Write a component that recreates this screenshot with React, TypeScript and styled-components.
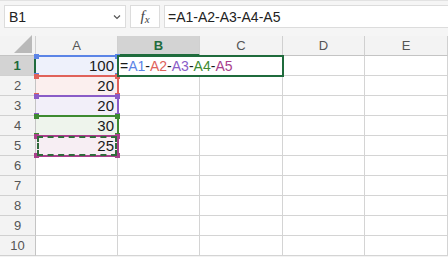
import React from 'react';
import styled, { createGlobalStyle } from 'styled-components';

const GlobalStyle = createGlobalStyle`
  html, body {
    margin: 0;
    padding: 0;
    background: #f3f3f3;
    font-family: 'Liberation Sans', Arial, sans-serif;
  }
`;

const COLS = ['A', 'B', 'C', 'D', 'E'];
const COL_W = [82, 82, 83, 82, 83];
const ROW_H = 20;
const HEAD_W = 36;
const HEAD_H = 20;

const values: Record<number, string> = { 1: '100', 2: '20', 3: '20', 4: '30', 5: '25' };

// formula reference colours
const refs = [
  { row: 1, color: '#5b84e6', fill: '#eef1fb' },
  { row: 2, color: '#e0625a', fill: '#fbefee' },
  { row: 3, color: '#8a5cc7', fill: '#f2eff9' },
  { row: 4, color: '#3e8a31', fill: '#eef4ec' },
  { row: 5, color: '#a9408c', fill: '#f7eef3' }
];

const GREEN = '#1f6b3c';

function App() {
  return (
    <>
      <GlobalStyle />
      <Toolbar>
        <NameBox>
          <span>B1</span>
          <svg width="8" height="6" viewBox="0 0 8 6">
            <path d="M1 1.5 L4 4.5 L7 1.5" fill="none" stroke="#555" strokeWidth="1.2" />
          </svg>
        </NameBox>
        <FxBox>
          <i>f</i>
          <small>x</small>
        </FxBox>
        <FormulaBox>=A1-A2-A3-A4-A5</FormulaBox>
      </Toolbar>
      <Sheet>
        <Corner>
          <svg width="18" height="18" viewBox="0 0 18 18">
            <path d="M18 0 L18 18 L0 18 Z" fill="#b9b9b9" />
          </svg>
        </Corner>
        {COLS.map((c) => (
          <ColHead key={c} $active={c === 'B'}>
            {c}
          </ColHead>
        ))}
        {Array.from({ length: 10 }, (_, i) => i + 1).map((r) => (
          <React.Fragment key={r}>
            <RowHead $active={r === 1}>{r}</RowHead>
            {COLS.map((c) => {
              const ref = c === 'A' ? refs.find((x) => x.row === r) : undefined;
              return (
                <Cell key={c} $fill={ref ? ref.fill : undefined}>
                  {c === 'A' ? values[r] : ''}
                </Cell>
              );
            })}
          </React.Fragment>
        ))}

        {refs.map((ref) => (
          <RefBox
            key={ref.row}
            $color={ref.color}
            style={{ top: HEAD_H + (ref.row - 1) * ROW_H - 1, left: HEAD_W - 1, width: COL_W[0] + 2, height: ROW_H + 2 }}
          >
            <Handle $color={ref.color} $pos="tl" />
            <Handle $color={ref.color} $pos="tr" />
            <Handle $color={ref.color} $pos="bl" />
            <Handle $color={ref.color} $pos="br" />
          </RefBox>
        ))}
        <CopyMarquee style={{ top: HEAD_H + 4 * ROW_H, left: HEAD_W + 1, width: COL_W[0] - 2, height: ROW_H }} />

        <EditBox>
          <span>=</span>
          <Ref $color={refs[0].color}>A1</Ref>-<Ref $color={refs[1].color}>A2</Ref>-
          <Ref $color={refs[2].color}>A3</Ref>-<Ref $color={refs[3].color}>A4</Ref>-
          <Ref $color={refs[4].color}>A5</Ref>
        </EditBox>
      </Sheet>
    </>
  );
}

export default App;

const Toolbar = styled.div`
  height: 36px;
  box-sizing: border-box;
  padding: 4px 0 8px 4px;
  display: flex;
  gap: 4px;
  background: #f5f5f5;
  border-top: 1px solid #e2e2e2;
`;

const NameBox = styled.div`
  width: 122px;
  box-sizing: border-box;
  background: #fff;
  border: 1px solid #dcdcdc;
  display: flex;
  align-items: center;
  justify-content: space-between;
  padding: 0 4px 0 4px;
  font-size: 14px;
  color: #222;
`;

const FxBox = styled.div`
  width: 30px;
  box-sizing: border-box;
  background: #fff;
  border: 1px solid #dcdcdc;
  display: flex;
  align-items: center;
  justify-content: center;
  font-family: 'Liberation Serif', 'Times New Roman', serif;
  color: #444;
  i {
    font-size: 15px;
  }
  small {
    font-size: 11px;
    font-style: italic;
    margin-top: 4px;
  }
`;

const FormulaBox = styled.div`
  flex: 1;
  background: #fff;
  border: 1px solid #dcdcdc;
  border-right: none;
  display: flex;
  align-items: center;
  padding-left: 3px;
  font-size: 14px;
  color: #222;
`;

const Sheet = styled.div`
  position: relative;
  display: grid;
  grid-template-columns: ${HEAD_W}px ${COL_W.map((w) => w + 'px').join(' ')};
  grid-template-rows: ${HEAD_H}px repeat(10, ${ROW_H}px);
  background: #fff;
`;

const Corner = styled.div`
  background: #f3f3f3;
  border-right: 1px solid #d0d0d0;
  border-bottom: 1px solid #c4c4c4;
  box-sizing: border-box;
  display: flex;
  align-items: flex-end;
  justify-content: flex-end;
  padding: 0 3px 2px 0;
`;

const ColHead = styled.div<{ $active?: boolean }>`
  box-sizing: border-box;
  background: ${(p) => (p.$active ? '#d3d3d3' : '#f3f3f3')};
  border-right: 1px solid #d0d0d0;
  border-bottom: ${(p) => (p.$active ? `2px solid ${GREEN}` : '1px solid #c4c4c4')};
  display: flex;
  align-items: center;
  justify-content: center;
  font-size: 13px;
  font-weight: ${(p) => (p.$active ? 'bold' : 'normal')};
  color: ${(p) => (p.$active ? GREEN : '#555')};
`;

const RowHead = styled.div<{ $active?: boolean }>`
  box-sizing: border-box;
  background: ${(p) => (p.$active ? '#d3d3d3' : '#f3f3f3')};
  border-right: ${(p) => (p.$active ? `2px solid ${GREEN}` : '1px solid #c4c4c4')};
  border-bottom: 1px solid #d0d0d0;
  display: flex;
  align-items: center;
  justify-content: center;
  font-size: 13px;
  font-weight: ${(p) => (p.$active ? 'bold' : 'normal')};
  color: ${(p) => (p.$active ? GREEN : '#555')};
`;

const Cell = styled.div<{ $fill?: string }>`
  box-sizing: border-box;
  background: ${(p) => p.$fill || '#fff'};
  border-right: 1px solid #d4d4d4;
  border-bottom: 1px solid #d4d4d4;
  display: flex;
  align-items: center;
  justify-content: flex-end;
  padding-right: 3px;
  font-size: 15px;
  color: #1a1a1a;
`;

const RefBox = styled.div<{ $color: string }>`
  position: absolute;
  box-sizing: border-box;
  border: 2px solid ${(p) => p.$color};
  border-left-color: transparent;
  pointer-events: none;
`;

const Handle = styled.div<{ $color: string; $pos: string }>`
  position: absolute;
  width: 5px;
  height: 5px;
  background: ${(p) => p.$color};
  ${(p) => (p.$pos[0] === 't' ? 'top: -3px;' : 'bottom: -3px;')}
  ${(p) => (p.$pos[1] === 'l' ? 'left: -3px;' : 'right: -3px;')}
`;

const CopyMarquee = styled.div`
  position: absolute;
  box-sizing: border-box;
  border: 2px dashed #2f6b3a;
  pointer-events: none;
`;

const EditBox = styled.div`
  position: absolute;
  top: ${HEAD_H - 1}px;
  left: ${HEAD_W + COL_W[0] - 1}px;
  width: ${COL_W[1] + COL_W[2] + 2}px;
  height: ${ROW_H + 2}px;
  box-sizing: border-box;
  border: 2px solid ${GREEN};
  background: #fff;
  display: flex;
  align-items: center;
  padding-left: 1px;
  font-size: 14px;
  color: #1a1a1a;
  white-space: pre;
`;

const Ref = styled.span<{ $color: string }>`
  color: ${(p) => p.$color};
`;
